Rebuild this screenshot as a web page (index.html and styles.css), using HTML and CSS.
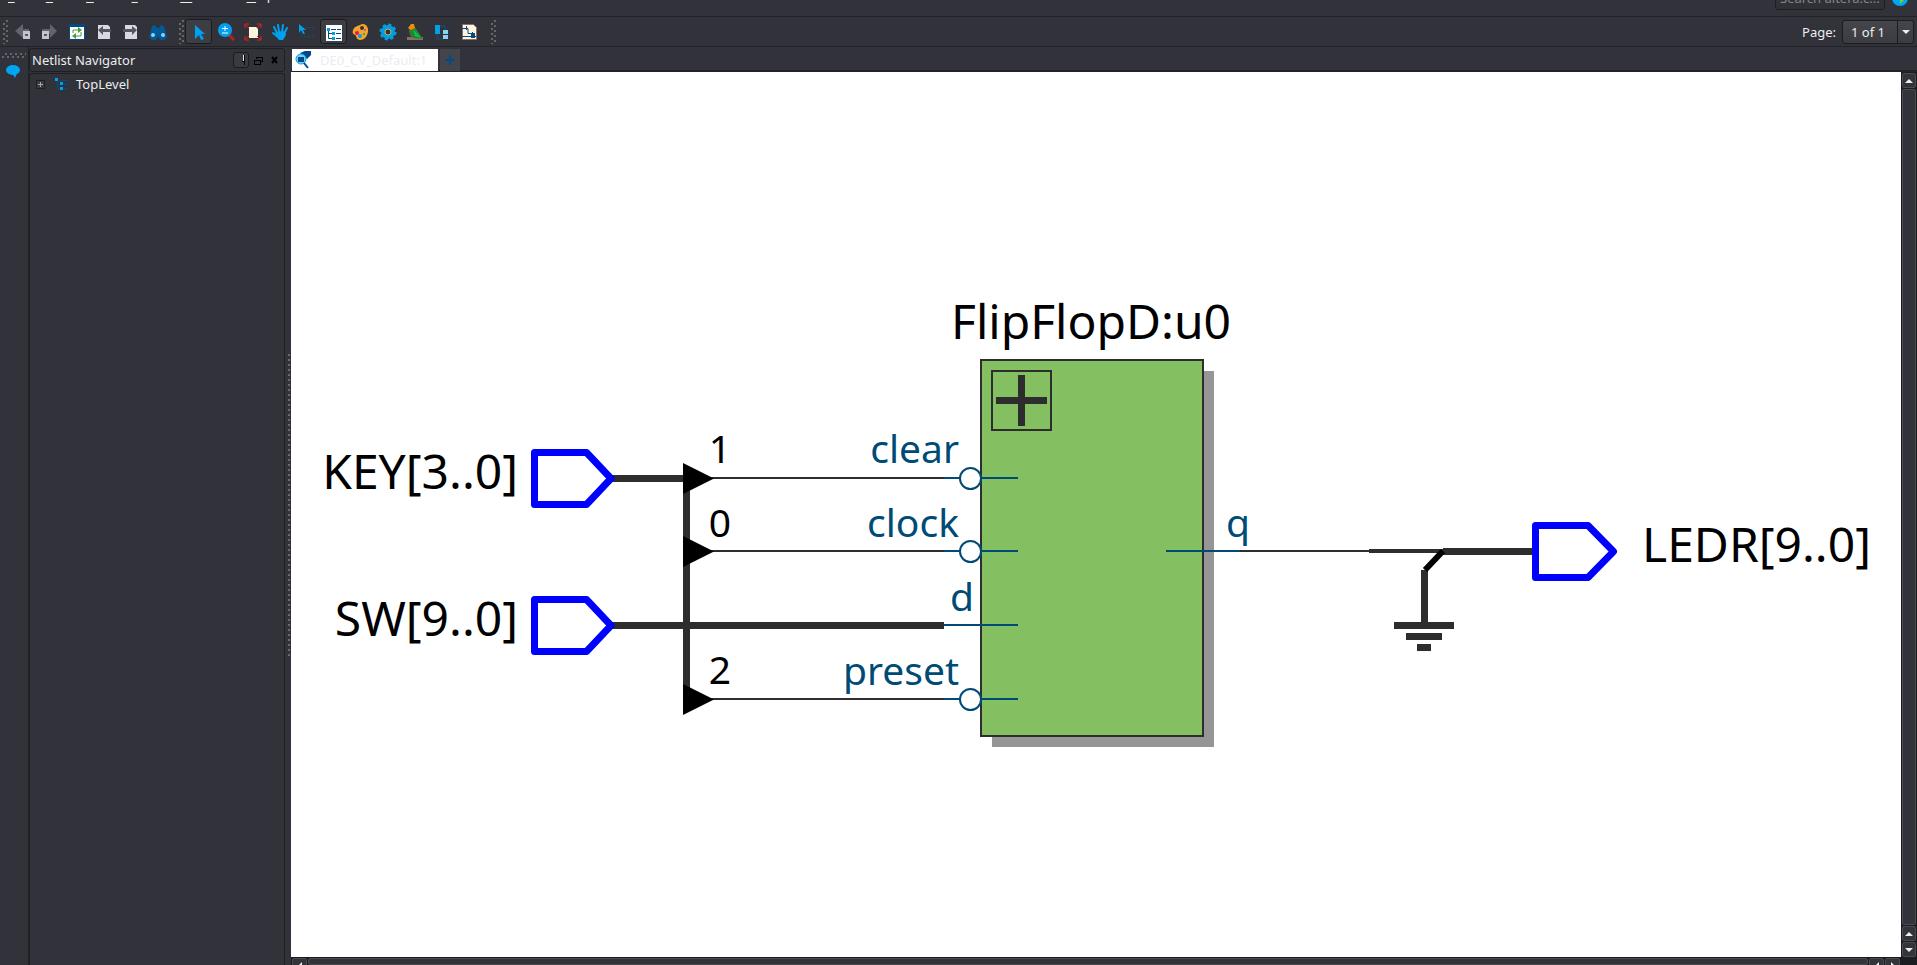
FILE: index.html
```
<!DOCTYPE html>
<html lang="en">
<head>
<meta charset="utf-8">
<title>Netlist Viewer</title>
<link rel="stylesheet" href="styles.css">
</head>
<body>
<header class="menubar">
  <nav class="menus">
    <button class="menu"><u>F</u>ile</button>
    <button class="menu"><u>E</u>dit</button>
    <button class="menu"><u>V</u>iew</button>
    <button class="menu"><u>T</u>ools</button>
    <button class="menu"><u>W</u>indow</button>
    <button class="menu"><u>H</u>elp</button>
  </nav>
  <div class="search">
    <input class="search-box" type="text" aria-label="Search" placeholder="Search altera.c...">
    <button class="globe" aria-label="Go">
      <svg width="16" height="16" viewBox="0 0 16 16"><circle cx="8" cy="8" r="8" fill="#00a5f5"/><path d="M8 5l5 4-5 5z" fill="#7fd320"/></svg>
    </button>
  </div>
</header>

<div class="toolbar">
  <span class="grip"></span>
  <button class="tool" aria-label="Back"><svg width="20" height="20" viewBox="0 0 20 20"><path d="M2 9l8-7v5h6v5h-6v4z" fill="#62636b"/><path d="M10 9h7v8h-7z" fill="#c4c5cc"/><path d="M12 12h3v2h-3z" fill="#55565e"/></svg></button>
  <button class="tool" aria-label="Forward"><svg width="20" height="20" viewBox="0 0 20 20"><path d="M17 9L10 2v5H2v5h8v4z" fill="#62636b"/><path d="M2 9h7v8H2z" fill="#c4c5cc"/><path d="M4 12h3v2H4z" fill="#55565e"/></svg></button>
  <button class="tool" aria-label="Refresh"><svg width="20" height="20" viewBox="0 0 20 20"><path d="M2 2h16v16H2z" fill="#004a86"/><path d="M3 5h14v12H3z" fill="#fff"/><path d="M6 11V8h6M14 10v4H8" fill="none" stroke="#4b9b3a" stroke-width="1"/><path d="M11 5l4 3-4 3zM9 11l-4 3 4 3z" fill="#4b9b3a"/></svg></button>
  <button class="tool" aria-label="Previous page"><svg width="20" height="20" viewBox="0 0 20 20"><path d="M4 3h10l2 2v12H4z" fill="#d8d9e3"/><path d="M4 8l5-4v3h8v3H9v3z" fill="#55565e"/></svg></button>
  <button class="tool" aria-label="Next page"><svg width="20" height="20" viewBox="0 0 20 20"><path d="M4 3h10l2 2v12H4z" fill="#d8d9e3"/><path d="M16 8l-5-4v3H2v3h9v3z" fill="#55565e"/></svg></button>
  <button class="tool" aria-label="Find"><svg width="20" height="20" viewBox="0 0 20 20"><path d="M4 4l3-1 2 3h2l2-3 3 1 2 8a4 4 0 0 1-7 4l-1-2-1 2a4 4 0 0 1-7-4z" fill="#005a96"/><circle cx="5" cy="13" r="2" fill="#8bd3f5"/><circle cx="15" cy="13" r="2" fill="#8bd3f5"/></svg></button>
  <span class="grip grip-second"></span>
  <button class="tool pressed" aria-label="Select"><svg width="20" height="20" viewBox="0 0 20 20"><path d="M6 3l10 9h-4l3 5-3 1-2-5-4 4z" fill="#00a0f0"/></svg></button>
  <button class="tool" aria-label="Zoom"><svg width="20" height="20" viewBox="0 0 20 20"><path d="M12 12l6 6" stroke="#b22222" stroke-width="3"/><circle cx="9" cy="8" r="7" fill="#00a0f0"/><path d="M9 4v5M6 6.500h6M6 11h6" stroke="#fff" stroke-width="1"/></svg></button>
  <button class="tool" aria-label="Fit in window"><svg width="20" height="20" viewBox="0 0 20 20"><path d="M6 5h7l2 2v9H6z" fill="#fff4dc"/><path d="M2 6V2h4M2 2l4 4M14 2h4v4M18 2l-4 4M2 14v4h4M2 18l4-4M14 18h4v-4M18 18l-4-4" fill="none" stroke="#e81c23"/></svg></button>
  <button class="tool" aria-label="Pan"><svg width="20" height="20" viewBox="0 0 20 20"><path d="M7 11L4 5M9 10L8 3M12 10l1-7M14 12l3-6M8 15l-5-4" stroke="#00a0f0" stroke-width="2" stroke-linecap="round"/><path d="M6 10l9-1 1 4-3 5H9l-4-5z" fill="#00a0f0"/></svg></button>
  <button class="tool" aria-label="Select area"><svg width="20" height="20" viewBox="0 0 20 20"><path d="M2 2l7 6H6l2 4H6L4 8l-2 3z" fill="#00a0f0"/><path d="M9 5.500h8v9H4v-3" fill="none" stroke="#17507f" stroke-dasharray="1 1"/></svg></button>
  <button class="tool pressed" aria-label="Netlist navigator"><svg width="20" height="20" viewBox="0 0 20 20"><path d="M2 3h16v16H2z" fill="#fff"/><path d="M4.500 8v8.500H9M5 11.500h4M7 7.500h5M12 11.500h5M12 16.500h5M13 7.500h4" fill="none" stroke="#004a86" stroke-width="1"/><path d="M3 6h3v3H3zM8 10h3v3H8zM8 15h3v3H8z" fill="#00a0e0"/></svg></button>
  <button class="tool" aria-label="Color settings"><svg width="20" height="20" viewBox="0 0 20 20"><path d="M9 3c5-3 9 2 8 7s-4 8-8 8-3-4-5-5-3-2-2-5 4-4 7-5z" fill="#f7a329"/><circle cx="11" cy="6" r="2" fill="#33333b"/><circle cx="6" cy="11" r="2" fill="#e8175d"/><circle cx="9" cy="14" r="2" fill="#00a0f0"/><circle cx="13" cy="12" r="1" fill="#30a030"/><circle cx="14" cy="8" r="1" fill="#b044dd"/></svg></button>
  <button class="tool" aria-label="Settings"><svg width="20" height="20" viewBox="0 0 20 20"><circle cx="10" cy="10" r="7" fill="none" stroke="#009fe3" stroke-width="3" stroke-dasharray="3 2.500"/><circle cx="10" cy="10" r="7" fill="#009fe3"/><circle cx="10" cy="10" r="3" fill="#33333b" stroke="#e0a840"/></svg></button>
  <button class="tool" aria-label="Bird's eye view"><svg width="20" height="20" viewBox="0 0 20 20"><path d="M2 15h16v3H2z" fill="#8d6e63"/><path d="M4 5h6l8 12-10-1c-4-2-4-7-4-11z" fill="#2e7d32"/><path d="M8 7l8 9-6-2z" fill="#00c853"/><path d="M3 6l3-4h3l1 4-4 2z" fill="#f28c00"/></svg></button>
  <button class="tool" aria-label="Hierarchy"><svg width="20" height="20" viewBox="0 0 20 20"><path d="M8 4h5v4M5 11v6h6" fill="none" stroke="#17507f" stroke-width="1"/><path d="M3 3h5v9H3z" fill="#00a0e8"/><path d="M11 8h5v4h-5zM11 13h5v4h-5z" fill="#8bd3f5"/></svg></button>
  <button class="tool" aria-label="Schematic"><svg width="20" height="20" viewBox="0 0 20 20"><path d="M3.500 2.500h11l3 3v12h-14z" fill="#fff4dc" stroke="#8d6e63"/><path d="M3 6.500h6v5h7M3 14.500h14M7.500 4v4M13.500 10v6" fill="none" stroke="#004a86"/><path d="M12 12h4v4h-4z" fill="#004a86"/></svg></button>
  <span class="grip grip-end"></span>
  <div class="page-picker">
    <label for="page">Page:</label>
    <div class="select-wrap">
      <select id="page"><option>1 of 1</option></select>
      <span class="select-arrow"></span>
    </div>
  </div>
</div>

<div class="workspace">
  <aside class="strip">
    <span class="strip-grip"></span>
    <button class="bubble" aria-label="Messages"><svg width="16" height="14" viewBox="0 0 16 14"><ellipse cx="8" cy="6" rx="7" ry="5" fill="#00a5f5"/><path d="M7 9l5 0-2 5z" fill="#00a5f5"/></svg></button>
  </aside>

  <section class="dock">
    <div class="dock-title">
      <h2>Netlist Navigator</h2>
      <button class="dock-info" aria-label="Pin"><svg width="10" height="12" viewBox="0 0 10 12" shape-rendering="crispEdges"><path d="M5 1h1v6H5z" fill="#e8e8e8"/><path d="M6 1h1v10H6zM4 7h3v1H4z" fill="#000"/></svg></button>
      <button class="dock-btn" aria-label="Float"><svg width="10" height="10" viewBox="0 0 10 10" shape-rendering="crispEdges"><path d="M3 4V2h6v4H7M1 5h6v4H1z" fill="none" stroke="#000" stroke-width="1"/></svg></button>
      <button class="dock-btn" aria-label="Close"><svg width="10" height="10" viewBox="0 0 10 10"><path d="M3 2l5 6M8 2L3 8" stroke="#000" stroke-width="2"/></svg></button>
    </div>
    <div class="tree">
      <button class="tree-row">
        <svg width="9" height="9" viewBox="0 0 9 9" shape-rendering="crispEdges"><path d="M0 0h9v9H0z" fill="#1e1f24"/><path d="M1 1h7v7H1z" fill="#3a3b41"/><path d="M2 4h5v1H2zM4 2h1v5H4z" fill="#a5a6ab"/></svg>
        <svg width="14" height="12" viewBox="0 0 14 12" shape-rendering="crispEdges"><path d="M2 3v7h3M4 2h9M2 6h12M8 10h5" fill="none" stroke="#004a86"/><path d="M0 0h3v3H0zM5 4h3v3H5zM5 9h3v3H5z" fill="#00a0e8"/></svg>
        <span>TopLevel</span>
      </button>
    </div>
  </section>

  <div class="splitter"><span class="splitter-dots"></span></div>

  <main class="editor">
    <div class="tabs">
      <button class="tab">
        <svg width="18" height="18" viewBox="0 0 18 18"><path d="M6 2l5-2h6v4l-4 4z" fill="#004a86"/><circle cx="7" cy="8" r="5" fill="#7fcdf2" stroke="#00a0e8"/><path d="M4 6h6v5H4z" fill="#004a86"/><path d="M10 12l4 5" stroke="#004a86" stroke-width="2"/></svg>
        <span>DE0_CV_Default:1</span>
      </button>
      <button class="tab-add" aria-label="New tab"><svg width="10" height="10" viewBox="0 0 10 10"><path d="M4 0h2v4h4v2H6v4H4V6H0V4h4z" fill="#004a86"/></svg></button>
    </div>
    <div class="canvas-area">
      <svg class="schematic" viewBox="291 72 1610 885" role="img" aria-label="Schematic">
        <g shape-rendering="crispEdges">
          <path class="shadow" d="M992 371h222v376H992z"/>
          <path class="block" d="M981 360h222v376H981z"/>
          <path class="line" d="M992 371h59v59h-59z"/>
          <path class="bus" d="M996 400.500H1047M1021.500 375V426"/>
          <path class="bus" d="M612 478.500H686.500V700M612 625.500H944"/>
          <path class="line" d="M710 478H944M710 551H944M710 699H944M1240 551H1369"/>
          <path class="wire4" d="M1369 551H1443"/>
          <path class="bus" d="M1443 551.500H1534M1424.500 570V622M1394 625.500h60M1406 636.500h36M1417 647.500h14"/>
          <path class="port" d="M944 478h74M944 551h74M944 625h74M944 699h74M1166 551h74"/>
        </g>
        <path class="diagonal" d="M1443 551L1425 570"/>
        <g class="arrows">
          <path d="M683 463l31 15.500-31 15.500z"/>
          <path d="M683 536l31 15.500-31 15.500z"/>
          <path d="M683 684l31 15.500-31 15.500z"/>
        </g>
        <g class="bubbles">
          <circle cx="970.500" cy="478.500" r="10.500"/>
          <circle cx="970.500" cy="551.500" r="10.500"/>
          <circle cx="970.500" cy="699.500" r="10.500"/>
        </g>
        <g class="pins">
          <path d="M534.500 452.500H586.500L611 478.500 586.500 504.500H534.500z"/>
          <path d="M534.500 599.500H586.500L611 625.500 586.500 651.500H534.500z"/>
          <path d="M1535.500 525.500H1588L1613.500 551.500 1588 577.500H1535.500z"/>
        </g>
        <g class="names">
          <text x="951" y="339">FlipFlopD:u0</text>
          <text x="518" y="489" text-anchor="end">KEY[3..0]</text>
          <text x="518" y="636" text-anchor="end">SW[9..0]</text>
          <text x="1642" y="562">LEDR[9..0]</text>
        </g>
        <g class="indices">
          <text x="720" y="463">1</text>
          <text x="720" y="537">0</text>
          <text x="720" y="684">2</text>
        </g>
        <g class="port-names">
          <text x="959" y="463">clear</text>
          <text x="959" y="537">clock</text>
          <text x="974" y="611">d</text>
          <text x="959" y="685">preset</text>
          <text x="1250" y="537">q</text>
        </g>
      </svg>
      <div class="vbar">
        <button class="sbtn" aria-label="Scroll up"><i class="up"></i></button>
        <div class="thumb"></div>
        <button class="sbtn" aria-label="Scroll up"><i class="up"></i></button>
        <button class="sbtn" aria-label="Scroll down"><i class="down"></i></button>
      </div>
    </div>
    <div class="hbar">
      <button class="sbtn" aria-label="Scroll left"><i class="left"></i></button>
      <div class="thumb"></div>
      <button class="sbtn" aria-label="Scroll left"><i class="left"></i></button>
      <button class="sbtn" aria-label="Scroll right"><i class="right"></i></button>
    </div>
  </main>
</div>
</body>
</html>
```
FILE: styles.css
```
* { box-sizing: border-box; }

body {
  margin: 0;
  height: 100vh;
  display: flex;
  flex-direction: column;
  overflow: hidden;
  background: #31323a;
  color: #eceded;
  font-family: "Noto Sans", sans-serif;
  font-size: 13px;
}

button, input, select {
  font: inherit;
  color: inherit;
  margin: 0;
  padding: 0;
  border: 0;
  background: none;
}

svg { display: block; flex: none; }

.menubar {
  flex: none;
  height: 17px;
  display: flex;
  align-items: flex-end;
  justify-content: space-between;
  border-bottom: 1px solid #212227;
  overflow: hidden;
}
.menus { display: flex; gap: 17px; padding: 0 0 12px 8px; }
.menu { line-height: 18px; white-space: nowrap; }
.menu u { text-underline-offset: 2px; text-decoration-thickness: 1px; }
.search { display: flex; align-items: flex-end; gap: 7px; padding: 0 9px 6px 0; }
.search-box {
  width: 110px;
  height: 24px;
  padding: 0 4px;
  border: 1px solid #1e1f24;
  border-radius: 3px;
  background: #303137;
}
.search-box::placeholder { color: #85868b; opacity: 1; }
.globe { margin-bottom: 4px; }

.toolbar {
  flex: none;
  height: 30px;
  display: flex;
  align-items: center;
  border-bottom: 1px solid #212227;
}
.grip {
  width: 6px;
  height: 24px;
  margin-left: 3px;
  background:
    radial-gradient(circle at 1px 1px, #66676d 1px, transparent 1px) 3px 0 / 6px 5px,
    radial-gradient(circle at 1px 1px, #66676d 1px, transparent 1px) 0 3px / 6px 5px;
}
.grip-second { margin-left: 8px; }
.grip-end { margin-left: 9px; }
.tool {
  width: 27px;
  height: 25px;
  display: flex;
  align-items: center;
  justify-content: center;
  border: 1px solid transparent;
  border-radius: 3px;
}
.tool.pressed { background: #3d3e43; border-color: #1b1c20; }
.page-picker {
  margin-left: auto;
  padding-right: 3px;
  display: flex;
  align-items: center;
  gap: 6px;
}
.select-wrap {
  display: flex;
  width: 72px;
  height: 24px;
  border: 1px solid #1b1c20;
  border-radius: 3px;
  background: linear-gradient(#45464b, #3b3c42);
}
.select-wrap select { flex: 1; min-width: 0; appearance: none; padding-left: 8px; }
.select-arrow {
  width: 16px;
  display: flex;
  align-items: center;
  justify-content: center;
  border-left: 1px solid #1b1c20;
}
.select-arrow::after {
  content: "";
  border: 4px solid transparent;
  border-top-color: #eee;
  border-bottom: 0;
}

.workspace { flex: 1; min-height: 0; display: flex; }

.strip {
  width: 29px;
  padding: 6px 2px;
  border-right: 1px solid #202126;
}
.strip-grip {
  display: block;
  height: 6px;
  background:
    radial-gradient(circle at 1px 1px, #66676d 1px, transparent 1px) 3px 0 / 5px 6px,
    radial-gradient(circle at 1px 1px, #66676d 1px, transparent 1px) 0 3px / 5px 6px;
}
.bubble { margin: 5px 0 0 3px; }

.dock { width: 256px; display: flex; flex-direction: column; padding-top: 1px; }
.dock-title {
  height: 24px;
  display: flex;
  align-items: center;
  gap: 4px;
  padding: 0 3px 0 2px;
  border: 1px solid #1e1f24;
  border-radius: 3px;
}
.dock-title h2 { flex: 1; margin: 0; font-size: 13px; font-weight: 400; }
.dock-info {
  width: 16px;
  height: 16px;
  padding-left: 4px;
  border: 1px solid #1b1c20;
  border-radius: 3px;
  background: #3a3b41;
}
.dock-btn { width: 12px; height: 10px; }
.tree {
  flex: 1;
  margin-top: 1px;
  padding: 0 6px;
  border: 1px solid #1e1f24;
  border-bottom: 0;
  border-radius: 3px 3px 0 0;
}
.tree-row { display: flex; align-items: center; height: 20px; }
.tree-row svg + svg { margin-left: 10px; }
.tree-row span { margin-left: 7px; }

.splitter { width: 6px; display: flex; align-items: center; justify-content: flex-end; }
.splitter-dots {
  width: 3px;
  height: 305px;
  background: linear-gradient(#6a6b71 2px, transparent 2px) 0 0 / 2px 5px repeat-y;
}

.editor { flex: 1; min-width: 0; display: flex; flex-direction: column; }
.tabs {
  flex: none;
  height: 25px;
  display: flex;
  align-items: flex-end;
  gap: 2px;
  padding: 0 1px 1px;
  box-shadow: inset 0 -2px #212227;
}
.tab {
  height: 22px;
  min-width: 146px;
  display: flex;
  align-items: center;
  gap: 8px;
  padding: 0 9px 0 2px;
  background: #fff;
  color: #ececf0;
}
.tab-add {
  width: 20px;
  height: 22px;
  display: flex;
  align-items: center;
  justify-content: center;
  background: #44454b;
}

.canvas-area { flex: 1; min-height: 0; display: flex; background: #fff; }
.schematic { flex: 1; min-width: 0; height: 100%; }
.shadow { fill: #969696; }
.block { fill: #84c061; stroke: #2d2d2d; stroke-width: 2; }
.line { fill: none; stroke: #2d2d2d; stroke-width: 2; }
.bus { fill: none; stroke: #2d2d2d; stroke-width: 7; }
.wire4 { stroke: #2d2d2d; stroke-width: 4; }
.port { stroke: #004b75; stroke-width: 2; }
.diagonal { stroke: #000; stroke-width: 6; }
.bubbles { fill: #fff; stroke: #004b75; stroke-width: 2; }
.pins { fill: #fff; stroke: #00f; stroke-width: 7; stroke-linejoin: round; }
.names { font-size: 48px; fill: #000; }
.indices { font-size: 39px; fill: #000; text-anchor: middle; }
.port-names { font-size: 39px; fill: #004b75; text-anchor: end; }

.vbar, .hbar { display: flex; flex: none; gap: 1px; background: #1b1c20; }
.vbar { width: 16px; flex-direction: column; padding: 1px 1px 0; }
.hbar { height: 8px; padding: 1px 17px 0 1px; overflow: hidden; }
.sbtn, .thumb { border: 1px solid #4a4b51; border-radius: 2px; background: #32333b; }
.thumb { flex: 1; }
.sbtn {
  flex: none;
  width: 14px;
  height: 15px;
  display: flex;
  align-items: center;
  justify-content: center;
}
.hbar .sbtn { width: 15px; }
.sbtn i { border: 4px solid transparent; }
.sbtn .up { border-top: 0; border-bottom-color: #eee; }
.sbtn .down { border-bottom: 0; border-top-color: #eee; }
.sbtn .left { border-left: 0; border-right-color: #eee; }
.sbtn .right { border-right: 0; border-left-color: #eee; }
```
